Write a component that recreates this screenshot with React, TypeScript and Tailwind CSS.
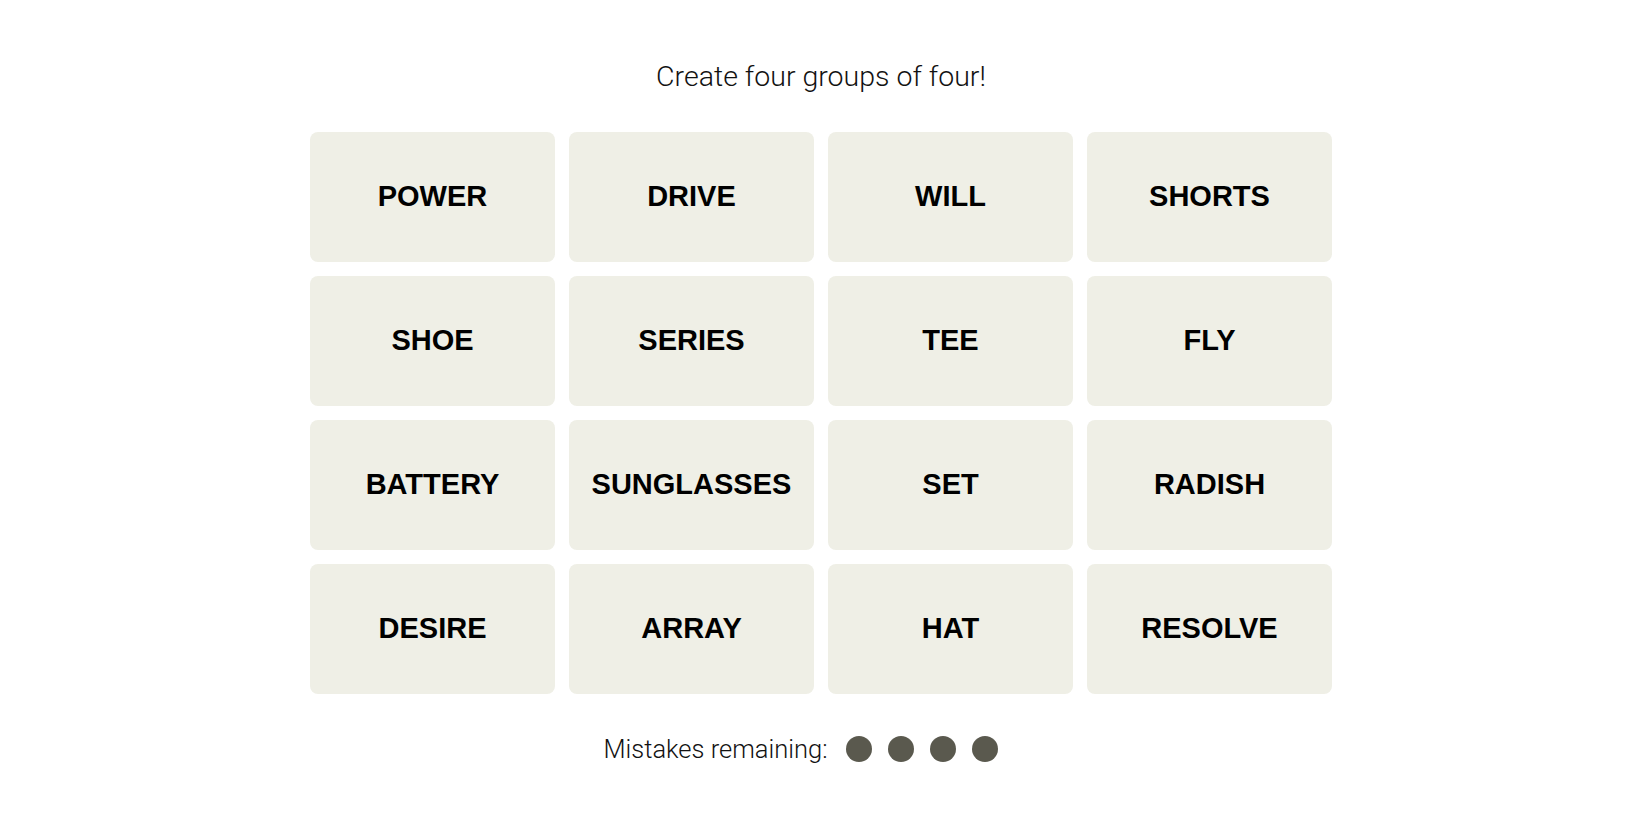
const words = [
  'POWER', 'DRIVE', 'WILL', 'SHORTS',
  'SHOE', 'SERIES', 'TEE', 'FLY',
  'BATTERY', 'SUNGLASSES', 'SET', 'RADISH',
  'DESIRE', 'ARRAY', 'HAT', 'RESOLVE',
]

export default function App() {
  return (
    <div className="min-h-screen bg-white pr-2 flex flex-col items-center text-black">
      {/* title */}
      <p className="mt-[60px] text-[28.5px] leading-[34px] font-light font-['Roboto',sans-serif] text-[#121212]">
        Create four groups of four!
      </p>

      {/* board */}
      <div className="mt-[38px] grid grid-cols-[repeat(4,245px)] auto-rows-[130px] gap-[14px]">
        {words.map((w) => (
          <button
            key={w}
            className="rounded-[8px] bg-[#efefe6] flex items-center justify-center font-['Liberation_Sans',Arial,sans-serif] font-bold text-[29px] text-black"
          >
            {w}
          </button>
        ))}
      </div>

      {/* mistakes */}
      <div className="mt-[40px] mr-[41px] flex items-center">
        <span className="text-[25.5px] leading-[30px] font-light font-['Roboto',sans-serif] text-[#121212]">
          Mistakes remaining:
        </span>
        <div className="ml-[18px] flex items-center gap-[16px]">
          {[0, 1, 2, 3].map((i) => (
            <span key={i} className="w-[26px] h-[26px] rounded-full bg-[#5a594e]" />
          ))}
        </div>
      </div>
    </div>
  )
}
